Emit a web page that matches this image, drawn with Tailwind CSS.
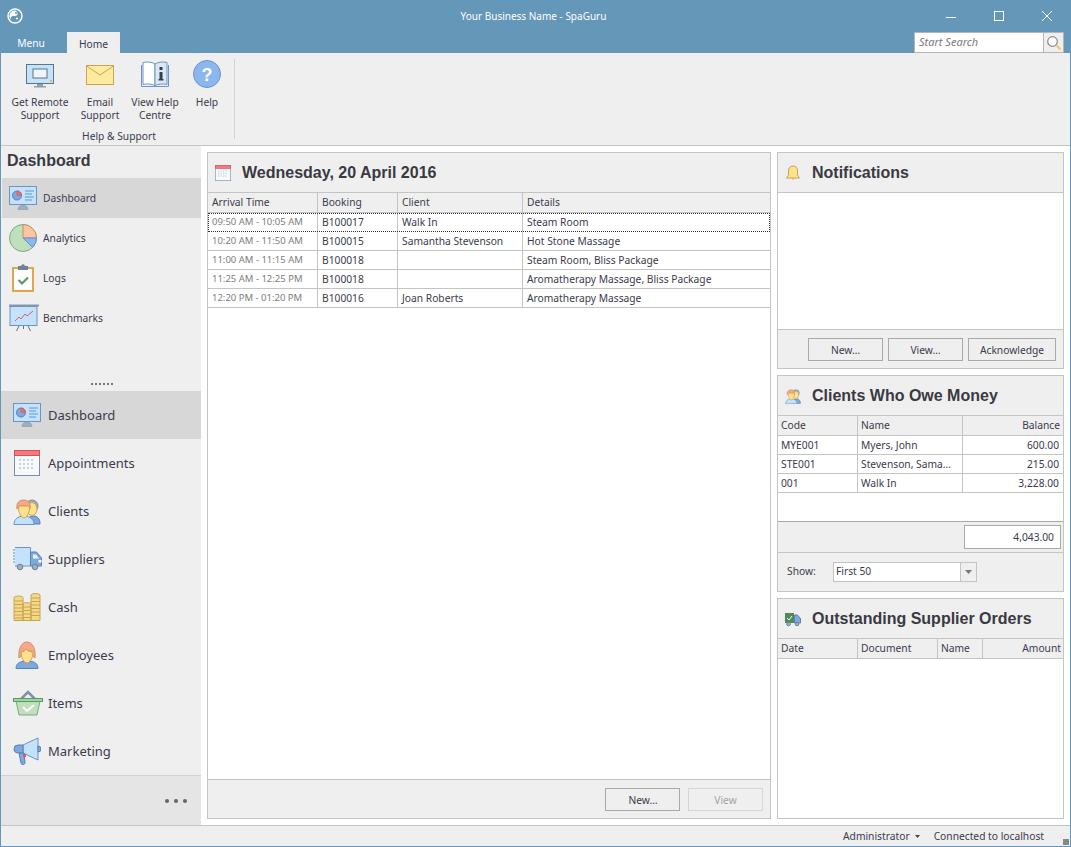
<!DOCTYPE html>
<html lang="en">
<head>
  <meta charset="UTF-8" />
  <title>Your Business Name - SpaGuru</title>
  <script src="https://cdn.jsdelivr.net/npm/@tailwindcss/browser@4"></script>
</head>
<body class="overflow-hidden bg-white font-['Noto_Sans',sans-serif] text-[10.25px] text-[#3b3b4c]">

  <!-- shared icons -->
  <svg class="hidden">
    <symbol id="i-dash" viewBox="0 0 28 24">
      <rect x="0.5" y="0.5" width="27" height="18" fill="#c5e2fb" stroke="#6d93c7" />
      <circle cx="8" cy="9.5" r="4.5" fill="#7ea8e0" stroke="#5d7fb5" />
      <path d="M8 9.5V5a4.5 4.5 0 0 1 4.5 4.5z" fill="#f0696f" stroke="#c9555b" stroke-width="0.5" />
      <path d="M16 5h9M16 8h7M16 11h9M16 14h7" stroke="#5b9bd5" />
      <path d="M9 23.5a5 4.5 0 0 1 10 0z" fill="#9db0c2" stroke="#7d8fa1" stroke-width="0.5" />
    </symbol>
    <symbol id="i-cal" viewBox="0 0 26 26">
      <rect x="0.5" y="0.5" width="25" height="25" fill="#f7f9fb" stroke="#7890ab" />
      <rect x="0.5" y="0.5" width="25" height="5" fill="#f6787c" stroke="#c9555b" />
      <path d="M5 10h16M5 14h16M5 18h16" stroke="#b8c6d4" stroke-width="1.6" stroke-dasharray="2 2" />
    </symbol>
    <symbol id="i-clients" viewBox="0 0 28 28">
      <path d="M13 27c0-6 5-8 7-8h1c3 0 6 3 6 7v1z" fill="#7ea8e0" stroke="#5d7fb5" />
      <circle cx="19" cy="9" r="6" fill="#a4acb6" stroke="#7f8a96" />
      <ellipse cx="19" cy="12" rx="5" ry="6.5" fill="#ffe08f" stroke="#c9a550" />
      <path d="M1 27.5c0-6 5-8 7-8h5c3 0 8 2 8 8z" fill="#c5e2fb" stroke="#6d93c7" />
      <path d="M4 12c-1-7 3-9 7-9s7 3 6 9c-1-2-2-3-3-3H7c-1 0-2 1-3 3z" fill="#f5a988" stroke="#d98a68" />
      <path d="M5.500 11c0-1 1-2 2-2h7c1 0 2 1 2 2 0 5-3 10-5.500 10S5.500 16 5.500 11z" fill="#ffe08f" stroke="#c9a550" />
    </symbol>
    <symbol id="i-truck" viewBox="0 0 30 24">
      <path d="M1 3h4M1 6h7M1 9h5M1 12h7M1 15h4" stroke="#5d8fd0" />
      <path d="M3 0.500h15.500V19H3" fill="#c5e2fb" stroke="#6d93c7" />
      <path d="M18.500 5h6l5 6v8h-11z" fill="#7ea8e0" stroke="#5d7fb5" />
      <path d="M21 7.500h3l3 4h-6z" fill="#e9f3fd" />
      <rect x="26.500" y="13" width="3" height="2.500" fill="#fff" />
      <circle cx="8" cy="20" r="2.800" fill="#9db0c2" stroke="#6f8296" />
      <circle cx="23" cy="20" r="2.800" fill="#9db0c2" stroke="#6f8296" />
    </symbol>
  </svg>

  <div class="flex h-[847px] w-[1071px] flex-col border-x border-b border-[#6497b8]">

    <!-- Title bar -->
    <div class="-mx-px flex h-[32px] items-center bg-[#6497b8] text-white">
      <div class="flex flex-1 items-center pl-[7px]">
        <svg class="h-[16px] w-[16px]" viewBox="0 0 16 16">
          <circle cx="8" cy="8" r="7" fill="#6497b8" stroke="#fff" stroke-width="1.400" />
          <path d="M8 2.500a5.500 5.500 0 0 0-4 9.300c-1-3 1-4 3-3.800 3 .2 4-1.500 3.500-3S9 2.500 8 2.500z" fill="#fff" />
          <circle cx="9" cy="5" r="1" fill="#6497b8" />
          <circle cx="10" cy="10.500" r="1" fill="#fff" />
        </svg>
      </div>
      <div class="ml-[8px] text-[10px]">Your Business Name - SpaGuru</div>
      <div class="flex flex-1 items-center justify-end pr-[19px]">
        <svg class="mr-[38px] h-[10px] w-[10px]" viewBox="0 0 10 10"><path d="M0 6.500h10" stroke="#fff" /></svg>
        <svg class="mr-[38px] h-[10px] w-[10px]" viewBox="0 0 10 10"><rect x="0.500" y="0.500" width="9" height="9" fill="none" stroke="#fff" /></svg>
        <svg class="h-[10px] w-[10px]" viewBox="0 0 10 10"><path d="M0 0l10 10M10 0L0 10" stroke="#fff" /></svg>
      </div>
    </div>

    <!-- Tabs row -->
    <div class="-mx-px flex h-[21px] items-stretch bg-[#6497b8] pr-[7px]">
      <div class="mr-[5px] flex w-[62px] items-center justify-center pt-[2px] text-white">Menu</div>
      <div class="flex w-[53px] items-center justify-center bg-[#efefef] pt-[5px]">Home</div>
      <div class="ml-auto flex h-[21px] w-[150px] border border-[#b5b5b5] bg-white">
        <div class="flex-1 pl-[4px] text-[11px] leading-[17px] text-[#7b7b7b] italic">Start Search</div>
        <div class="flex w-[20px] items-center justify-center border-l border-[#b5b5b5] bg-[#efefef]">
          <svg class="h-[16px] w-[16px]" viewBox="0 0 16 16">
            <circle cx="6.500" cy="6.500" r="4.800" fill="#fff" stroke="#8a8a8a" stroke-width="1.200" />
            <path d="M10.500 10.500l4 4" stroke="#f3c77a" stroke-width="2.400" />
          </svg>
        </div>
      </div>
    </div>

    <!-- Ribbon -->
    <div class="flex h-[93px] border-b border-[#c4c4c4] bg-[#efefef]">
      <div class="flex w-[233px] flex-col">
        <div class="flex h-[72px] items-start pt-[8px]">
          <div class="flex w-[78px] flex-col items-center text-center leading-[13px]">
            <svg class="mb-[7px] h-[28px] w-[28px]" viewBox="0 0 28 28">
              <rect x="0.500" y="3.500" width="27" height="19" fill="#c5e2fb" stroke="#5f7488" />
              <rect x="7" y="8" width="14" height="9" fill="#eef5fb" stroke="#5f7488" />
              <rect x="24" y="19" width="2" height="1.500" fill="#e0b040" />
              <path d="M11 23h6v2h3v1.500H8V25h3z" fill="#8ea0b0" />
            </svg>
            <div>Get Remote<br />Support</div>
          </div>
          <div class="flex w-[42px] flex-col items-center text-center leading-[13px]">
            <svg class="mb-[7px] h-[28px] w-[28px]" viewBox="0 0 28 28">
              <rect x="0.500" y="4.500" width="27" height="19" fill="#ffeb9f" stroke="#c9a550" />
              <path d="M0.500 5l13.500 9 13.500-9" fill="none" stroke="#c9a550" />
            </svg>
            <div>Email<br />Support</div>
          </div>
          <div class="ml-[7px] flex w-[54px] flex-col items-center text-center leading-[13px]">
            <svg class="mb-[7px] h-[28px] w-[28px]" viewBox="0 0 28 28">
              <path d="M0.500 4v21.500h27V4" fill="#e9f3fd" stroke="#6d93c7" />
              <path d="M14 3C11 1 6 .5 2 1.500v22c4-1 9-.5 12 1z" fill="#fff" stroke="#6d93c7" />
              <path d="M14 3c3-2 8-2.500 12-1.500v22c-4-1-9-.5-12 1z" fill="#dbe8f3" stroke="#6d93c7" />
              <path d="M18.500 6h3v3h-3zM18.500 11h3v7h1v1.500h-5V18h1z" fill="#30404f" />
            </svg>
            <div>View Help<br />Centre</div>
          </div>
          <div class="flex w-[50px] flex-col items-center text-center leading-[13px]">
            <svg class="-mt-[1px] mb-[8px] h-[28px] w-[28px]" viewBox="0 0 28 28">
              <circle cx="14" cy="14" r="13.500" fill="#8bb6ee" stroke="#6d93c7" />
              <text x="14" y="20.500" text-anchor="middle" fill="#fff" font-family="Liberation Sans" font-weight="700" font-size="18">?</text>
            </svg>
            <div>Help</div>
          </div>
        </div>
        <div class="pl-[3px] pt-[5px] text-center leading-[13px]">Help &amp; Support</div>
      </div>
      <div class="mt-[6px] h-[80px] w-px bg-[#d4d4d4]"></div>
    </div>

    <!-- Body -->
    <div class="flex min-h-0 flex-1">

      <!-- Sidebar -->
      <div class="flex w-[200px] flex-col bg-[#efefef]">
        <div class="flex h-[32px] items-center pb-[3px] pl-[6px] font-['Liberation_Sans',sans-serif] text-[16px] font-bold text-[#3a3a42]">Dashboard</div>
        <div class="flex h-[160px] flex-col pl-px">
          <div class="flex h-[40px] items-center gap-[6px] bg-[#d7d7d7] pl-[7px]">
            <svg class="h-[24px] w-[28px]"><use href="#i-dash" /></svg><span class="mt-[2px]">Dashboard</span>
          </div>
          <div class="flex h-[40px] items-center gap-[6px] pl-[7px]">
            <svg class="h-[28px] w-[28px]" viewBox="0 0 28 28">
              <circle cx="14" cy="14" r="13.500" fill="#bfe0bd" stroke="#7cab80" />
              <path d="M14 14V0.500A13.500 13.500 0 0 1 27.500 14z" fill="#fcc7a0" stroke="#c98f66" />
              <path d="M14 14h13.500a13.500 13.500 0 0 1-4 9.500z" fill="#8bb6ee" stroke="#6d93c7" />
            </svg><span class="mt-[2px]">Analytics</span>
          </div>
          <div class="flex h-[40px] items-center gap-[6px] pl-[7px]">
            <svg class="h-[28px] w-[28px]" viewBox="0 0 28 28">
              <rect x="4" y="4" width="20" height="23" fill="#fff" stroke="#e0a64f" stroke-width="2" />
              <rect x="9" y="2" width="10" height="4" fill="#6f8296" />
              <circle cx="14" cy="2" r="1.800" fill="#6f8296" />
              <path d="M9.500 16l3.500 3.500 6-6" fill="none" stroke="#5b9a63" stroke-width="2.200" />
            </svg><span class="mt-[2px]">Logs</span>
          </div>
          <div class="flex h-[40px] items-center gap-[6px] pl-[7px]">
            <svg class="-mr-[2px] h-[30px] w-[30px]" viewBox="0 0 30 30">
              <path d="M0 2.500h30" stroke="#8a98a8" stroke-width="2" />
              <rect x="1" y="3.500" width="27" height="19" fill="#c5e2fb" stroke="#6d93c7" />
              <path d="M6 18l4-4 2 2 4-5 2 2 6-5" fill="none" stroke="#d9636a" />
              <path d="M10 23l-2.500 5M19 23l2.500 5M14.500 23v3" stroke="#5f7488" />
            </svg><span class="mt-[2px]">Benchmarks</span>
          </div>
        </div>
        <div class="flex h-[53px] items-end justify-center pb-[6px] pl-[2px]">
          <div class="h-[2px] w-[22px] bg-[repeating-linear-gradient(90deg,#777_0,#777_2px,transparent_2px,transparent_4px)]"></div>
        </div>
        <div class="flex flex-col text-[13px]">
          <div class="flex h-[48px] items-center gap-[7px] bg-[#d7d7d7] pl-[12px]">
            <svg class="h-[24px] w-[28px]"><use href="#i-dash" /></svg><span class="mt-[2px]">Dashboard</span>
          </div>
          <div class="flex h-[48px] items-center pl-[13px]">
            <svg class="mr-[8px] h-[26px] w-[26px]"><use href="#i-cal" /></svg><span class="mt-[2px]">Appointments</span>
          </div>
          <div class="flex h-[48px] items-center gap-[7px] pl-[12px]">
            <svg class="h-[28px] w-[28px]"><use href="#i-clients" /></svg><span class="mt-[2px]">Clients</span>
          </div>
          <div class="flex h-[48px] items-center gap-[6px] pl-[11px]">
            <svg class="h-[24px] w-[30px]"><use href="#i-truck" /></svg><span class="mt-[2px]">Suppliers</span>
          </div>
          <div class="flex h-[48px] items-center gap-[7px] pl-[12px]">
            <svg class="h-[28px] w-[28px]" viewBox="0 0 28 28">
              <path d="M1 4.500a4.500 1.500 0 0 1 9 0V27.500H1zM10 10.500a4.500 1.500 0 0 1 8 0V27.500h-8zM18 2a4.500 1.500 0 0 1 9 0V27.500h-9z" fill="#f2d98a" stroke="#c9a550" />
              <path d="M1 8h9M1 11.500h9M1 15h9M1 18.500h9M1 22h9M1 25h9M10 14h8M10 17.500h8M10 21h8M10 24.500h8M18 5h9M18 8.500h9M18 12h9M18 15.500h9M18 19h9M18 22.500h9" stroke="#c9a550" />
            </svg><span class="mt-[2px]">Cash</span>
          </div>
          <div class="flex h-[48px] items-center gap-[7px] pl-[12px]">
            <svg class="h-[28px] w-[28px]" viewBox="0 0 28 28">
              <path d="M3 27.500c0-5 4-7 7-7h8c3 0 7 2 7 7z" fill="#7ea8e0" stroke="#5d7fb5" />
              <path d="M6 17c-1-10 3-16 8-16s9 6 8 16c-2-1-3-3-3-7H9c0 4-1 6-3 7z" fill="#f5a988" stroke="#d98a68" />
              <path d="M8 11c2 0 4-1 5-3 1 2 5 3 7 3 0 6-3 11-6 11s-6-5-6-11z" fill="#ffe08f" stroke="#c9a550" />
            </svg><span class="mt-[2px]">Employees</span>
          </div>
          <div class="flex h-[48px] items-center gap-[5px] pl-[12px]">
            <svg class="h-[28px] w-[30px]" viewBox="0 0 30 28">
              <path d="M8 10l7-7 7 7" fill="none" stroke="#7f91a5" stroke-width="2.500" />
              <path d="M3 12h24l-3 14H6z" fill="#bfe0bd" stroke="#7cab80" />
              <rect x="0.500" y="9.500" width="29" height="3" fill="#a5d3a5" stroke="#5b9a63" />
              <path d="M10 18l4 4 7-6" fill="none" stroke="#fff" stroke-width="2" />
            </svg><span class="mt-[2px]">Items</span>
          </div>
          <div class="flex h-[48px] items-center gap-[7px] pl-[12px]">
            <svg class="h-[28px] w-[28px]" viewBox="0 0 28 28">
              <path d="M10 8l15-7v22l-15-7z" fill="#c5e2fb" stroke="#6d93c7" />
              <path d="M25 9a3 3 0 0 1 0 6z" fill="#7ea8e0" stroke="#5d7fb5" />
              <path d="M10 8H5a4 4 0 0 0-4 4v1a4 4 0 0 0 4 3h5z" fill="#7ea8e0" stroke="#5d7fb5" />
              <path d="M6 16h5l1 9a2 2 0 0 1-4 1z" fill="#7ea8e0" stroke="#5d7fb5" />
              <rect x="10" y="17" width="3" height="3" fill="#e0585e" />
            </svg><span class="mt-[2px]">Marketing</span>
          </div>
        </div>
        <div class="flex flex-1 items-center justify-end gap-[5px] border-t border-[#d2d2d2] bg-[#e5e5e5] pr-[14px]">
          <div class="h-[4px] w-[4px] rounded-full bg-[#666]"></div>
          <div class="h-[4px] w-[4px] rounded-full bg-[#666]"></div>
          <div class="h-[4px] w-[4px] rounded-full bg-[#666]"></div>
        </div>
      </div>

      <!-- Appointments panel -->
      <div class="flex flex-1 gap-[6px] p-[6px]">
        <div class="flex w-[564px] flex-col border border-[#c4c4c4]">
          <div class="flex h-[40px] shrink-0 items-center gap-[11px] border-b border-[#c4c4c4] bg-[#efefef] pl-[7px] font-['Liberation_Sans',sans-serif] text-[16px] font-bold text-[#3a3a42]">
            <svg class="h-[16px] w-[16px]"><use href="#i-cal" /></svg>
            <span>Wednesday, 20 April 2016</span>
          </div>
          <div class="grid h-[20px] shrink-0 grid-cols-[110px_80px_125px_1fr] border-b border-[#c4c4c4] bg-[#efefef] leading-[18px]">
            <div class="border-r border-[#c4c4c4] pl-[4px]">Arrival Time</div>
            <div class="border-r border-[#c4c4c4] pl-[4px]">Booking</div>
            <div class="border-r border-[#c4c4c4] pl-[4px]">Client</div>
            <div class="pl-[4px]">Details</div>
          </div>
          <div class="grid h-[19px] shrink-0 grid-cols-[110px_80px_125px_1fr] leading-[18px] outline-1 -outline-offset-1 outline-[#333] outline-dotted">
            <div class="border-r border-[#c4c4c4] pl-[4px] text-[9.5px] text-[#7d7d7d]">09:50 AM - 10:05 AM</div>
            <div class="border-r border-[#c4c4c4] pl-[4px]">B100017</div>
            <div class="border-r border-[#c4c4c4] pl-[4px]">Walk In</div>
            <div class="pl-[4px]">Steam Room</div>
          </div>
          <div class="grid h-[19px] shrink-0 grid-cols-[110px_80px_125px_1fr] border-b border-[#c4c4c4] leading-[18px]">
            <div class="border-r border-[#c4c4c4] pl-[4px] text-[9.5px] text-[#7d7d7d]">10:20 AM - 11:50 AM</div>
            <div class="border-r border-[#c4c4c4] pl-[4px]">B100015</div>
            <div class="border-r border-[#c4c4c4] pl-[4px]">Samantha Stevenson</div>
            <div class="pl-[4px]">Hot Stone Massage</div>
          </div>
          <div class="grid h-[19px] shrink-0 grid-cols-[110px_80px_125px_1fr] border-b border-[#c4c4c4] leading-[18px]">
            <div class="border-r border-[#c4c4c4] pl-[4px] text-[9.5px] text-[#7d7d7d]">11:00 AM - 11:15 AM</div>
            <div class="border-r border-[#c4c4c4] pl-[4px]">B100018</div>
            <div class="border-r border-[#c4c4c4] pl-[4px]"></div>
            <div class="pl-[4px]">Steam Room, Bliss Package</div>
          </div>
          <div class="grid h-[19px] shrink-0 grid-cols-[110px_80px_125px_1fr] border-b border-[#c4c4c4] leading-[18px]">
            <div class="border-r border-[#c4c4c4] pl-[4px] text-[9.5px] text-[#7d7d7d]">11:25 AM - 12:25 PM</div>
            <div class="border-r border-[#c4c4c4] pl-[4px]">B100018</div>
            <div class="border-r border-[#c4c4c4] pl-[4px]"></div>
            <div class="pl-[4px]">Aromatherapy Massage, Bliss Package</div>
          </div>
          <div class="grid h-[19px] shrink-0 grid-cols-[110px_80px_125px_1fr] border-b border-[#c4c4c4] leading-[18px]">
            <div class="border-r border-[#c4c4c4] pl-[4px] text-[9.5px] text-[#7d7d7d]">12:20 PM - 01:20 PM</div>
            <div class="border-r border-[#c4c4c4] pl-[4px]">B100016</div>
            <div class="border-r border-[#c4c4c4] pl-[4px]">Joan Roberts</div>
            <div class="pl-[4px]">Aromatherapy Massage</div>
          </div>
          <div class="flex-1"></div>
          <div class="flex h-[39px] shrink-0 items-center justify-end gap-[8px] border-t border-[#c4c4c4] bg-[#efefef] pr-[7px] pt-[1px]">
            <button class="h-[23px] w-[75px] border border-[#a9a9a9] bg-[#efefef] pl-[1px] pt-[2px]">New…</button>
            <button class="h-[23px] w-[75px] border border-[#d6d6d6] bg-[#efefef] pt-[2px] text-[#a3a3a3]">View</button>
          </div>
        </div>

        <!-- Right column -->
        <div class="flex w-[287px] flex-col gap-[6px]">

          <div class="flex h-[217px] flex-col border border-[#c4c4c4]">
            <div class="flex h-[40px] shrink-0 items-center gap-[11px] border-b border-[#c4c4c4] bg-[#efefef] pl-[7px] font-['Liberation_Sans',sans-serif] text-[16px] font-bold text-[#3a3a42]">
              <svg class="h-[16px] w-[16px]" viewBox="0 0 16 16">
                <path d="M8 1c3 0 4.500 2 4.500 5v4l2 3h-13l2-3V6c0-3 1.500-5 4.500-5z" fill="#ffe08f" stroke="#c9a550" />
                <path d="M6.500 13.500a1.600 1.600 0 0 0 3 0z" fill="#c9a550" />
              </svg>
              <span>Notifications</span>
            </div>
            <div class="flex-1"></div>
            <div class="flex h-[39px] shrink-0 items-center justify-end gap-[5px] border-t border-[#c4c4c4] bg-[#efefef] pr-[7px] pt-[1px]">
              <button class="h-[23px] w-[75px] border border-[#a9a9a9] bg-[#efefef] pt-[2px]">New…</button>
              <button class="h-[23px] w-[75px] border border-[#a9a9a9] bg-[#efefef] pt-[2px]">View…</button>
              <button class="h-[23px] w-[88px] border border-[#a9a9a9] bg-[#efefef] pt-[2px]">Acknowledge</button>
            </div>
          </div>

          <div class="flex h-[217px] flex-col border border-[#c4c4c4]">
            <div class="flex h-[40px] shrink-0 items-center gap-[11px] border-b border-[#c4c4c4] bg-[#efefef] pl-[7px] font-['Liberation_Sans',sans-serif] text-[16px] font-bold text-[#3a3a42]">
              <svg class="h-[16px] w-[16px]"><use href="#i-clients" /></svg>
              <span>Clients Who Owe Money</span>
            </div>
            <div class="grid h-[20px] shrink-0 grid-cols-[80px_105px_1fr] border-b border-[#c4c4c4] bg-[#efefef] leading-[18px]">
              <div class="border-r border-[#c4c4c4] pl-[3px]">Code</div>
              <div class="border-r border-[#c4c4c4] pl-[3px]">Name</div>
              <div class="pr-[3px] text-right">Balance</div>
            </div>
            <div class="grid h-[19px] shrink-0 grid-cols-[80px_105px_1fr] border-b border-[#c4c4c4] leading-[18px]">
              <div class="border-r border-[#c4c4c4] pl-[3px]">MYE001</div>
              <div class="border-r border-[#c4c4c4] pl-[3px]">Myers, John</div>
              <div class="pr-[4px] text-right">600.00</div>
            </div>
            <div class="grid h-[19px] shrink-0 grid-cols-[80px_105px_1fr] border-b border-[#c4c4c4] leading-[18px]">
              <div class="border-r border-[#c4c4c4] pl-[3px]">STE001</div>
              <div class="border-r border-[#c4c4c4] pl-[3px]">Stevenson, Sama…</div>
              <div class="pr-[4px] text-right">215.00</div>
            </div>
            <div class="grid h-[19px] shrink-0 grid-cols-[80px_105px_1fr] border-b border-[#c4c4c4] leading-[18px]">
              <div class="border-r border-[#c4c4c4] pl-[3px]">001</div>
              <div class="border-r border-[#c4c4c4] pl-[3px]">Walk In</div>
              <div class="pr-[4px] text-right">3,228.00</div>
            </div>
            <div class="flex-1"></div>
            <div class="flex h-[32px] shrink-0 items-center justify-end border-y border-t-[#a9a9a9] border-b-[#c4c4c4] bg-[#efefef] pr-[2px]">
              <div class="h-[24px] w-[97px] border border-[#a9a9a9] bg-white pr-[6px] text-right leading-[22px]">4,043.00</div>
            </div>
            <div class="flex h-[38px] shrink-0 items-center bg-[#efefef] pl-[9px]">
              <span class="w-[46px]">Show:</span>
              <div class="flex h-[20px] w-[144px] border border-[#c4c4c4] bg-white">
                <div class="flex-1 pl-[2px] leading-[16px]">First 50</div>
                <div class="flex w-[16px] items-center justify-center border-l border-[#c4c4c4] bg-[#efefef]">
                  <svg class="h-[4px] w-[7px]" viewBox="0 0 7 4"><path d="M0 0h7L3.500 4z" fill="#777" /></svg>
                </div>
              </div>
            </div>
          </div>

          <div class="flex flex-1 flex-col border border-[#c4c4c4]">
            <div class="flex h-[40px] shrink-0 items-center gap-[11px] border-b border-[#c4c4c4] bg-[#efefef] pl-[7px] font-['Liberation_Sans',sans-serif] text-[16px] font-bold text-[#3a3a42]">
              <svg class="h-[16px] w-[16px]" viewBox="0 0 16 16">
                <rect x="0" y="2" width="9" height="10" fill="#4f8a5b" />
                <path d="M2 7l2 2 3-4" fill="none" stroke="#fff" />
                <path d="M9.500 4h3l3 3.500V12h-6z" fill="#7ea8e0" stroke="#5d7fb5" />
                <circle cx="3.500" cy="13" r="1.800" fill="#9db0c2" stroke="#6f8296" />
                <circle cx="12" cy="13" r="1.800" fill="#9db0c2" stroke="#6f8296" />
              </svg>
              <span>Outstanding Supplier Orders</span>
            </div>
            <div class="grid h-[20px] shrink-0 grid-cols-[80px_80px_45px_1fr] border-b border-[#c4c4c4] bg-[#efefef] leading-[18px]">
              <div class="border-r border-[#c4c4c4] pl-[3px]">Date</div>
              <div class="border-r border-[#c4c4c4] pl-[3px]">Document</div>
              <div class="border-r border-[#c4c4c4] pl-[3px]">Name</div>
              <div class="pr-[2px] text-right">Amount</div>
            </div>
          </div>
        </div>
      </div>
    </div>

    <!-- Status bar -->
    <div class="relative flex h-[21px] shrink-0 items-center justify-end border-t border-[#c4c4c4] bg-[#efefef] pr-[26px]">
      <span class="mt-[2px]">Administrator</span>
      <svg class="ml-[5px] mr-[14px] h-[3px] w-[5px]" viewBox="0 0 5 3"><path d="M0 0h5L2.500 3z" fill="#444" /></svg>
      <span class="mt-[2px]">Connected to localhost</span>
      <div class="absolute bottom-[1px] right-[1px] h-[6px] w-[6px] bg-[radial-gradient(#888_1px,transparent_1px)] bg-[length:2px_2px]"></div>
    </div>
  </div>
</body>
</html>
